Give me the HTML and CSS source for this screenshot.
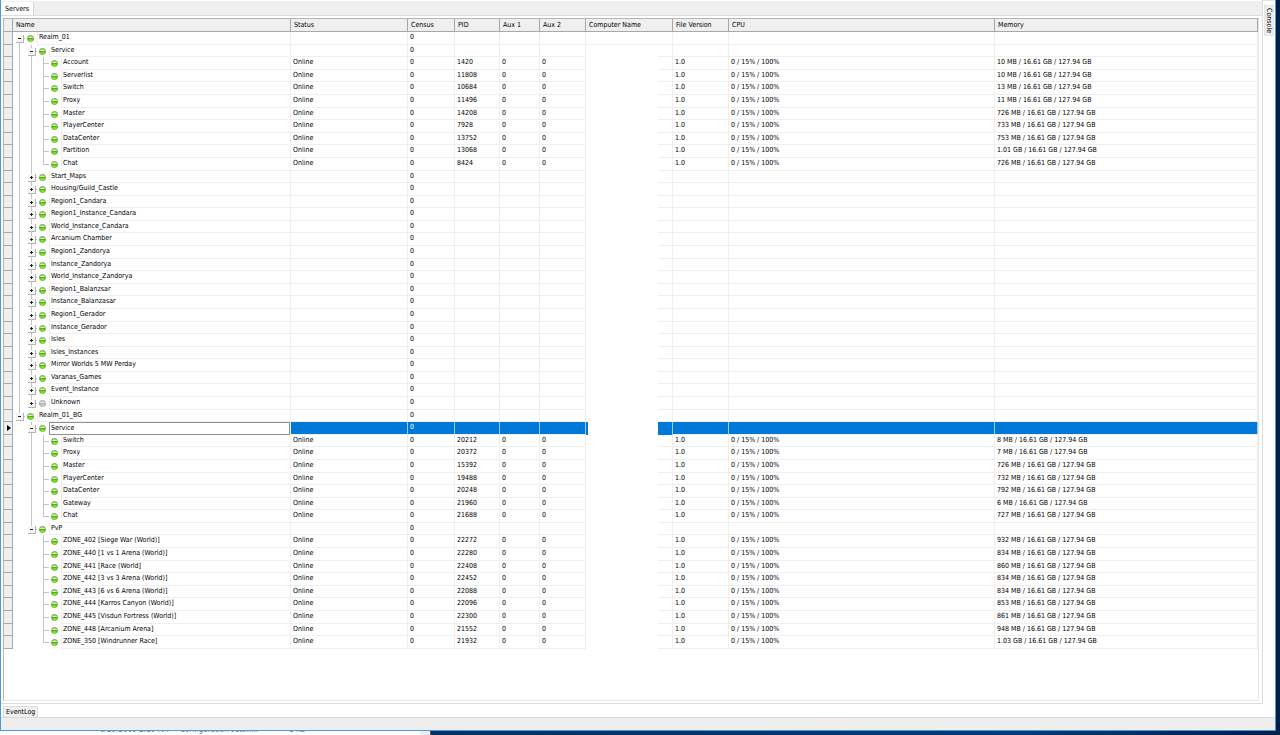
FILE: index.html
```
<!DOCTYPE html>
<html lang="en">
<head>
  <meta charset="UTF-8">
  <title>Servers</title>
  <link rel="stylesheet" href="styles.css">
</head>
<body>
<svg class="defs" aria-hidden="true">
  <defs>
    <linearGradient id="green" x1="0" y1="0" x2="0" y2="1">
      <stop offset="0" stop-color="#6fb84a"/>
      <stop offset=".34" stop-color="#d4f8b0"/>
      <stop offset=".44" stop-color="#3fa010"/>
      <stop offset=".62" stop-color="#66dc08"/>
      <stop offset="1" stop-color="#a8fc30"/>
    </linearGradient>
    <linearGradient id="grey" x1="0" y1="0" x2="0" y2="1">
      <stop offset="0" stop-color="#b4b4b4"/>
      <stop offset=".36" stop-color="#ededed"/>
      <stop offset=".42" stop-color="#b0b0b0"/>
      <stop offset="1" stop-color="#e2e2e2"/>
    </linearGradient>
    <symbol id="ball-on" viewBox="0 0 7 7">
      <circle cx="3.5" cy="3.5" r="3.1" fill="url(#green)" stroke="#4f8a34" stroke-width=".6"/>
    </symbol>
    <symbol id="ball-off" viewBox="0 0 7 7">
      <circle cx="3.5" cy="3.5" r="3.1" fill="url(#grey)" stroke="#8a8a8a" stroke-width=".6"/>
    </symbol>
  </defs>
</svg>

<div class="window">
  <div class="workspace">
    <main class="main">
      <nav class="tabs">
        <button class="tab tab-active" type="button">Servers</button>
      </nav>
      <div class="panel">
        <div class="grid-box">
          <table class="grid">
            <colgroup>
              <col class="c-mark"><col class="c-name"><col class="c-status"><col class="c-census"><col class="c-pid">
              <col class="c-aux1"><col class="c-aux2"><col class="c-computer"><col class="c-version"><col class="c-cpu"><col>
            </colgroup>
            <thead>
              <tr>
                <td class="mark"></td>
                <th>Name</th>
                <th>Status</th>
                <th>Census</th>
                <th>PID</th>
                <th>Aux 1</th>
                <th>Aux 2</th>
                <th>Computer Name</th>
                <th>File Version</th>
                <th>CPU</th>
                <th>Memory</th>
              </tr>
            </thead>
            <tbody id="rows"></tbody>
          </table>
        </div>
      </div>
    </main>
    <aside class="side">
      <button class="side-tab" type="button">Console</button>
    </aside>
  </div>
  <div class="dock">
    <button class="dock-tab" type="button">EventLog</button>
  </div>
  <footer class="status-bar"></footer>
</div>
<div class="desktop">
  <div class="explorer">
    <span class="file-date">6/29/2009 2:19 AM</span>
    <span class="file-type">Configuration settin...</span>
    <span class="file-size">1 KB</span>
  </div>
</div>

<script src="script.js"></script>
</body>
</html>
```
FILE: styles.css
```
* {
  box-sizing: border-box;
}
html,
body {
  height: 100%;
}
body {
  margin: 0;
  display: flex;
  flex-direction: column;
  background: linear-gradient(to right, #00285a, #003a70 80%, #001f47);
  color: #000;
  font-family: "DejaVu Sans Condensed", "Liberation Sans", Arial, sans-serif;
  font-size: 7px;
  line-height: 12px;
  overflow: hidden;
}
button {
  margin: 0;
  font: inherit;
  color: inherit;
  white-space: nowrap;
}
.defs {
  position: absolute;
  width: 0;
  height: 0;
}

/* window frame */
.window {
  flex: 1;
  min-height: 0;
  margin-right: 4px;
  display: flex;
  flex-direction: column;
  background: #fff;
  border: 1px solid #4b9ade;
  border-top: 0;
}
.workspace {
  flex: 1;
  min-height: 0;
  display: flex;
}
.main {
  flex: 1;
  min-width: 0;
  display: flex;
  flex-direction: column;
  border-right: 1px solid #dcdcdc;
  border-bottom: 1px solid #dcdcdc;
}

/* tabs */
.tabs {
  display: flex;
  height: 16px;
  padding-top: 1px;
  background: #efefef;
  border-top: 1px solid #fff;
  border-bottom: 1px solid #dedede;
}
.tab {
  padding: 0 4px;
  border: 0;
  background: none;
}
.tab-active {
  background: #fff;
  border-right: 1px solid #d4d4d4;
}
.side {
  width: 12px;
  padding: 4px 1px;
  border-top: 1px solid #e4e4e4;
}
.side-tab {
  width: 10px;
  padding: 2px 0;
  border: 1px solid #e4e4e4;
  background: #f0f0f0;
  line-height: 8px;
  writing-mode: vertical-rl;
}
.dock {
  display: flex;
  height: 14px;
  padding: 2px 2px 0;
  border-bottom: 1px solid #dadada;
}
.dock-tab {
  padding: 0 2px;
  border: 1px solid #dcdcdc;
  border-bottom: 0;
  background: #f0f0f0;
  line-height: 10px;
}
.status-bar {
  height: 12px;
  background: #eee;
}

/* desktop showing below the window */
.desktop {
  flex: none;
  height: 4px;
  overflow: hidden;
}
.explorer {
  width: 431px;
  height: 100%;
  padding-left: 100px;
  display: flex;
  align-items: flex-end;
  background: linear-gradient(to right, #fff 420px, #ececec 420px);
  border-right: 1px solid #555;
  color: #777;
  font-size: 8px;
  line-height: 10px;
  white-space: nowrap;
}
.file-date {
  width: 80px;
}
.file-type {
  width: 109px;
}

/* server grid */
.panel {
  flex: 1;
  min-height: 0;
  padding: 2px 3px 2px 2px;
}
.grid-box {
  height: 100%;
  overflow: hidden;
  border: 1px solid #b4b4b4;
  border-right-color: #e6e6e6;
  border-bottom-color: #e6e6e6;
}
.grid {
  width: 100%;
  table-layout: fixed;
  border-collapse: separate;
  border-spacing: 0;
}
.c-mark { width: 9px; }
.c-name { width: 278px; }
.c-status { width: 117px; }
.c-census { width: 47px; }
.c-pid { width: 45px; }
.c-aux1 { width: 40px; }
.c-aux2 { width: 46px; }
.c-computer { width: 87px; }
.c-version { width: 56px; }
.c-cpu { width: 266px; }
.grid th,
.grid td {
  height: inherit;
  padding: 0 2px;
  overflow: hidden;
  white-space: nowrap;
  text-align: left;
  vertical-align: top;
  font-weight: normal;
  line-height: 11px;
}
.grid thead tr {
  height: 13px;
}
.grid th {
  padding-left: 3px;
  background: #efefef;
  border-right: 1px solid #a8a8a8;
  border-bottom: 1px solid #a8a8a8;
  line-height: 12px;
}
.grid tbody tr {
  height: 13px;
}
.grid tbody tr:nth-child(12n + 2),
.grid tbody tr:nth-child(12n + 4),
.grid tbody tr:nth-child(12n + 7),
.grid tbody tr:nth-child(12n + 9),
.grid tbody tr:nth-child(12n + 12) {
  height: 12px;
}
.grid tbody td {
  border-right: 1px solid #efefef;
  border-bottom: 1px solid #efefef;
}
.grid .mark {
  padding: 0;
  background: #efefef;
  border-right: 1px solid #a8a8a8;
  border-bottom: 1px solid #a8a8a8;
}
.grid tbody .name {
  padding: 0;
  border-bottom: 0;
}
.grid tbody tr:not(:first-child) .computer {
  background: linear-gradient(#efefef, #efefef) 72px 100% / 100% 1px no-repeat;
  border-bottom: 0;
}
.grid tbody .selected td:not(.mark, .name, .computer) {
  background: #0078d7;
  border-right-color: #9ccaf0;
  color: #fff;
}
.grid tbody tr.selected:not(:first-child) .computer {
  background: linear-gradient(to right, #0078d7 2px, #fff 2px 72px, #0078d7 72px);
  border-right-color: #9ccaf0;
}
.arrow {
  display: block;
  width: 4px;
  height: 6px;
  margin: 3px 0 0 3px;
}

/* tree */
.node {
  height: inherit;
  display: flex;
}
.slot {
  flex: none;
  width: 12px;
  display: flex;
  align-items: flex-start;
  background-repeat: no-repeat;
}
.line {
  background-image: linear-gradient(#c4c4c4, #c4c4c4);
  background-size: 1px 100%;
  background-position: 6px 0;
}
.tee {
  background-image: linear-gradient(#c4c4c4, #c4c4c4), linear-gradient(#c4c4c4, #c4c4c4);
  background-size: 1px 100%, 6px 1px;
  background-position: 6px 0, 6px 6px;
}
.elbow {
  background-image: linear-gradient(#c4c4c4, #c4c4c4), linear-gradient(#c4c4c4, #c4c4c4);
  background-size: 1px 6px, 6px 1px;
  background-position: 6px 0, 6px 6px;
}
.first {
  background-image: linear-gradient(#c4c4c4, #c4c4c4), linear-gradient(#c4c4c4, #c4c4c4);
  background-size: 1px 6px, 6px 1px;
  background-position: 6px 100%, 6px 6px;
}
.toggle {
  width: 8px;
  height: 8px;
  margin: 3px 0 0 3px;
  padding: 0;
  display: flex;
  background: #f6f6f6;
  border: 0;
  border-right: 1px solid #b4b4b4;
  border-bottom: 1px solid #b4b4b4;
}
.toggle svg {
  width: 7px;
  height: 7px;
}
.ball {
  width: 7px;
  height: 7px;
  margin: 3px 0 0 2px;
}
.label {
  flex: 1;
  padding-left: 1px;
  border-left: 1px solid #efefef;
  border-bottom: 1px solid #efefef;
}
.selected .label {
  line-height: 10px;
  border: 1px solid #909090;
}
```
FILE: script.js
```
// [level, name, pid, memory]; groups have no pid
const servers = [
  [0, "Realm_01"],
  [1, "Service"],
  [2, "Account", "1420", "10 MB"],
  [2, "Serverlist", "11808", "10 MB"],
  [2, "Switch", "10684", "13 MB"],
  [2, "Proxy", "11496", "11 MB"],
  [2, "Master", "14208", "726 MB"],
  [2, "PlayerCenter", "7928", "733 MB"],
  [2, "DataCenter", "13752", "753 MB"],
  [2, "Partition", "13068", "1.01 GB"],
  [2, "Chat", "8424", "726 MB"],
  [1, "Start_Maps"],
  [1, "Housing/Guild_Castle"],
  [1, "Region1_Candara"],
  [1, "Region1_Instance_Candara"],
  [1, "World_Instance_Candara"],
  [1, "Arcanium Chamber"],
  [1, "Region1_Zandorya"],
  [1, "Instance_Zandorya"],
  [1, "World_Instance_Zandorya"],
  [1, "Region1_Balanzsar"],
  [1, "Instance_Balanzasar"],
  [1, "Region1_Gerador"],
  [1, "Instance_Gerador"],
  [1, "Isles"],
  [1, "Isles_Instances"],
  [1, "Mirror Worlds 5 MW Perday"],
  [1, "Varanas_Games"],
  [1, "Event_Instance"],
  [1, "Unknown"],
  [0, "Realm_01_BG"],
  [1, "Service"],
  [2, "Switch", "20212", "8 MB"],
  [2, "Proxy", "20372", "7 MB"],
  [2, "Master", "15392", "726 MB"],
  [2, "PlayerCenter", "19488", "732 MB"],
  [2, "DataCenter", "20248", "792 MB"],
  [2, "Gateway", "21960", "6 MB"],
  [2, "Chat", "21688", "727 MB"],
  [1, "PvP"],
  [2, "ZONE_402 [Siege War (World)]", "22272", "932 MB"],
  [2, "ZONE_440 [1 vs 1 Arena (World)]", "22280", "834 MB"],
  [2, "ZONE_441 [Race (World]", "22408", "860 MB"],
  [2, "ZONE_442 [3 vs 3 Arena (World)]", "22452", "834 MB"],
  [2, "ZONE_443 [6 vs 6 Arena (World)]", "22088", "834 MB"],
  [2, "ZONE_444 [Karros Canyon (World)]", "22096", "853 MB"],
  [2, "ZONE_445 [Visdun Fortress (World)]", "22300", "861 MB"],
  [2, "ZONE_448 [Arcanium Arena]", "21552", "948 MB"],
  [2, "ZONE_350 [Windrunner Race]", "21932", "1.03 GB"]
];
const selected = 31;

// is there another node on this level before its parent ends?
function hasNext(index, level) {
  for (let i = index + 1; i < servers.length; i++) {
    if (servers[i][0] < level) return false;
    if (servers[i][0] === level) return true;
  }
  return false;
}

function createToggle(open, name) {
  const plus = open ? "" : '<path d="M3.5 2v3"/>';
  return `<button class="toggle" type="button" aria-expanded="${open}" aria-label="${name}">
    <svg viewBox="0 0 7 7" stroke="#222"><path d="M2 3.5h3"/>${plus}</svg>
  </button>`;
}

function createNode(index) {
  const [level, name, pid] = servers[index];
  let slots = "";
  for (let l = 0; l < level; l++) {
    slots += `<span class="slot ${hasNext(index, l) ? "line" : ""}"></span>`;
  }
  const open = index + 1 < servers.length && servers[index + 1][0] > level;
  let shape = hasNext(index, level) ? "tee" : "elbow";
  if (index === 0) shape = "first";
  slots += `<span class="slot ${shape}">${pid ? "" : createToggle(open, name)}</span>`;
  const ball = name === "Unknown" ? "ball-off" : "ball-on";
  return `<div class="node">${slots}
    <span class="slot"><svg class="ball"><use href="#${ball}"/></svg></span>
    <span class="label">${name}</span>
  </div>`;
}

function createRow(server, index) {
  const [, , pid, memory] = server;
  const arrow = '<svg class="arrow" viewBox="0 0 4 6"><path d="M0 0l4 3-4 3z"/></svg>';
  return `<tr class="${index === selected ? "selected" : ""}">
    <td class="mark">${index === selected ? arrow : ""}</td>
    <td class="name">${createNode(index)}</td>
    <td>${pid ? "Online" : ""}</td>
    <td>0</td>
    <td>${pid || ""}</td>
    <td>${pid ? "0" : ""}</td>
    <td>${pid ? "0" : ""}</td>
    <td class="computer"></td>
    <td>${pid ? "1.0" : ""}</td>
    <td>${pid ? "0 / 15% / 100%" : ""}</td>
    <td>${pid ? memory + " / 16.61 GB / 127.94 GB" : ""}</td>
  </tr>`;
}

document.getElementById("rows").innerHTML = servers.map(createRow).join("");
```
